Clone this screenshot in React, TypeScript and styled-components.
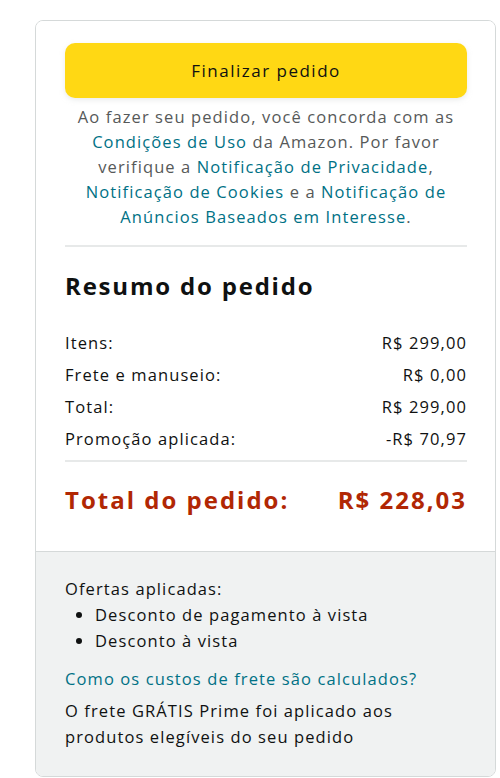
import React from 'react';
import styled, { createGlobalStyle } from 'styled-components';

const GlobalStyle = createGlobalStyle`
    body {
        margin: 0;
        background: #ffffff;
        font-family: 'Open Sans', 'Noto Sans', Arial, sans-serif;
        color: #0f1111;
    }
`;

interface Row {
    label: string;
    value: string;
}

const rows: Row[] = [
    { label: 'Itens:', value: 'R$ 299,00' },
    { label: 'Frete e manuseio:', value: 'R$ 0,00' },
    { label: 'Total:', value: 'R$ 299,00' },
    { label: 'Promoção aplicada:', value: '-R$ 70,97' },
];

const offers = ['Desconto de pagamento à vista', 'Desconto à vista'];

const App = () => {
    return (
        <Page>
            <GlobalStyle />
            <Card>
                <Top>
                    <CheckoutButton>Finalizar pedido</CheckoutButton>
                    <Legal>
                        Ao fazer seu pedido, você concorda com as
                        <br />
                        <Link>Condições de Uso</Link> da Amazon. Por favor
                        <br />
                        verifique a <Link>Notificação de Privacidade</Link>,
                        <br />
                        <Link>Notificação de Cookies</Link> e a <Link>Notificação de</Link>
                        <br />
                        <Link>Anúncios Baseados em Interesse</Link>.
                    </Legal>
                    <Divider />
                    <Heading>Resumo do pedido</Heading>
                    <Rows>
                        {rows.map((r) => (
                            <SummaryRow key={r.label}>
                                <span>{r.label}</span>
                                <span>{r.value}</span>
                            </SummaryRow>
                        ))}
                    </Rows>
                    <Divider $tight />
                    <TotalRow>
                        <span>Total do pedido:</span>
                        <span>R$ 228,03</span>
                    </TotalRow>
                </Top>
                <Bottom>
                    <Text>Ofertas aplicadas:</Text>
                    <OfferList>
                        {offers.map((o) => (
                            <li key={o}>{o}</li>
                        ))}
                    </OfferList>
                    <ShipLink>Como os custos de frete são calculados?</ShipLink>
                    <Text>
                        O frete GRÁTIS Prime foi aplicado aos
                        <br />
                        produtos elegíveis do seu pedido
                    </Text>
                </Bottom>
            </Card>
        </Page>
    );
};

const Page = styled.div`
    padding: 20px 0 0 35px;
`;

const Card = styled.div`
    width: 461px;
    height: 757px;
    box-sizing: border-box;
    border: 1px solid #d5d9d9;
    border-radius: 8px;
    overflow: hidden;
    display: flex;
    flex-direction: column;
`;

const Top = styled.div`
    background: #ffffff;
    padding: 22px 28px 35px 29px;
    border-bottom: 1px solid #d5d9d9;
`;

const CheckoutButton = styled.button`
    display: block;
    width: 100%;
    height: 55px;
    border: none;
    border-radius: 10px;
    background: #ffd814;
    box-shadow: 0 2px 5px rgba(213, 217, 217, 0.5);
    font-family: inherit;
    font-size: 17px;
    letter-spacing: 1.5px;
    color: #0f1111;
    cursor: pointer;
`;

const Legal = styled.p`
    margin: 6px 0 0;
    text-align: center;
    font-size: 16.5px;
    letter-spacing: 1.1px;
    line-height: 25px;
    color: #565959;
`;

const Link = styled.span`
    color: #007185;
`;

const Divider = styled.div<{ $tight?: boolean }>`
    height: 2px;
    background: #e7e9e9;
    margin: ${(p) => (p.$tight ? '5px 0 22px' : '16px 0 24px')};
`;

const Heading = styled.h2`
    margin: 0;
    font-size: 24px;
    letter-spacing: 1.8px;
    line-height: 30px;
    font-weight: 700;
    color: #0f1111;
`;

const Rows = styled.div`
    margin-top: 26px;
    display: flex;
    flex-direction: column;
`;

const SummaryRow = styled.div`
    display: flex;
    justify-content: space-between;
    font-size: 16.5px;
    letter-spacing: 1.1px;
    line-height: 32px;
    color: #0f1111;
`;

const TotalRow = styled.div`
    display: flex;
    justify-content: space-between;
    font-size: 24px;
    letter-spacing: 2px;
    line-height: 32px;
    font-weight: 700;
    color: #b12704;
`;

const Bottom = styled.div`
    flex: 1;
    background: #f0f2f2;
    padding: 24px 29px 0;
`;

const Text = styled.div`
    font-size: 16.5px;
    letter-spacing: 1.1px;
    line-height: 26px;
    color: #0f1111;
`;

const OfferList = styled.ul`
    margin: 0;
    padding-left: 30px;
    font-size: 16.5px;
    letter-spacing: 1.1px;
    line-height: 26px;
    color: #0f1111;
`;

const ShipLink = styled.div`
    margin: 12px 0 6px;
    font-size: 16.5px;
    letter-spacing: 1.1px;
    line-height: 26px;
    color: #007185;
`;

export default App;
